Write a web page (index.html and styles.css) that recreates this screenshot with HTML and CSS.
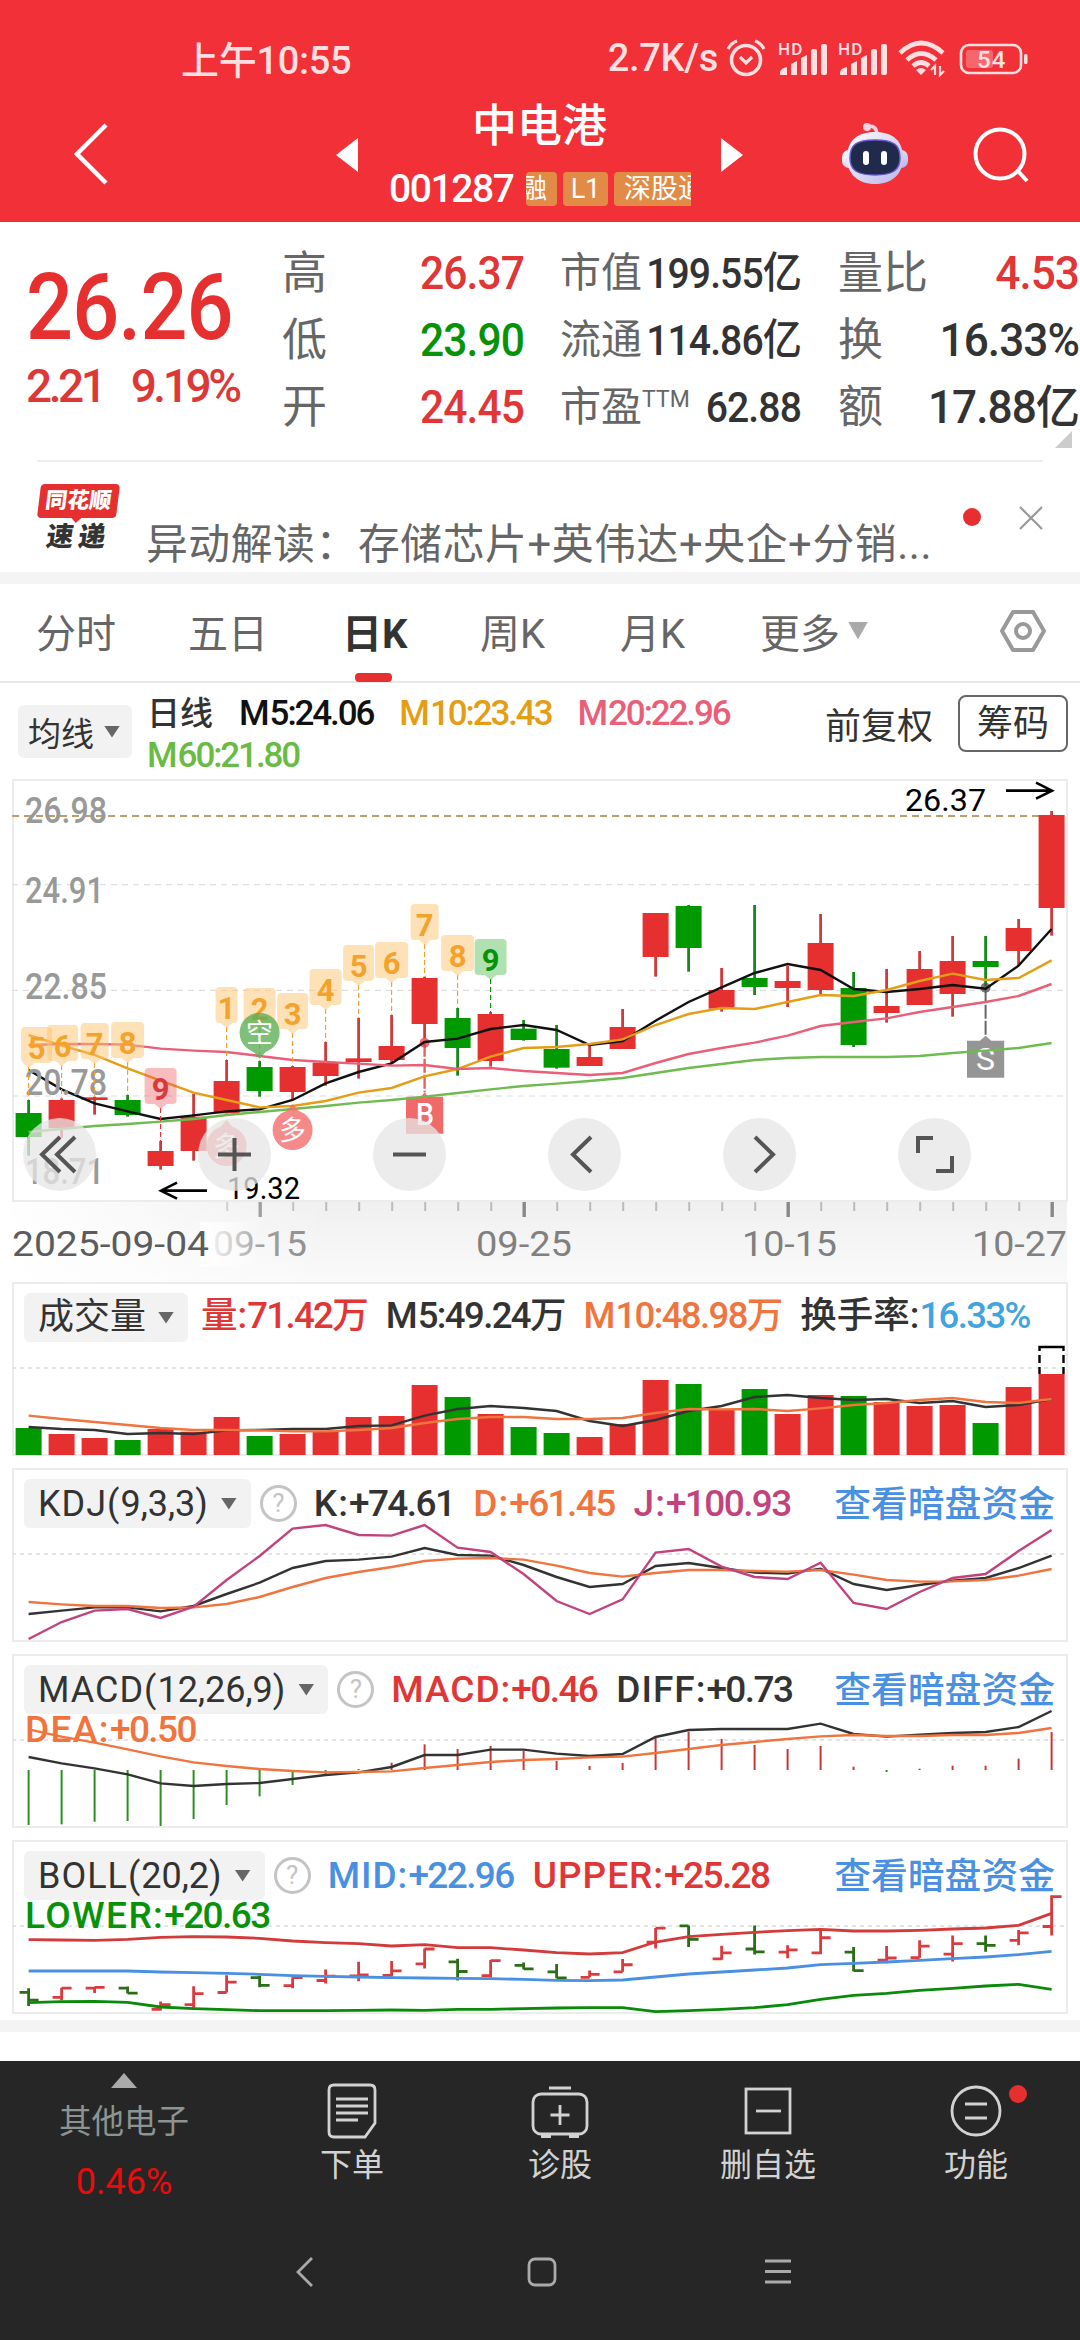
FILE: index.html
```html
<!DOCTYPE html>
<html lang="zh-CN">
  <head>
    <meta charset="UTF-8" />
    <meta name="viewport" content="width=device-width, initial-scale=1.0" />
    <title>中电港 001287</title>
    <link rel="stylesheet" href="styles.css" />
  </head>
  <body>
    <header class="header">
      <div class="status-bar">
        <span class="clock">上午10:55</span>
        <div class="status-right">
          <span class="speed">2.7K/s</span>
          <svg class="alarm" width="40" height="40" viewBox="0 0 40 40" fill="none" stroke="#ffdfe0" stroke-width="3.6">
            <circle cx="20" cy="21" r="14.5" />
            <path d="M14 18l6 6 6-6M2 10q3-6 9-8M38 10q-3-6-9-8" stroke-width="3.2" />
          </svg>
          <svg class="signal" width="50" height="36" viewBox="0 0 50 36" fill="#ffdfe0">
            <text x="0" y="14" font-size="17" font-weight="500" textLength="24">HD</text>
            <path d="M2 34v-3q1-4 7-5v8z" />
            <path d="M13 34V23l6-3v14z" />
            <path d="M23 34V17l6-3v20z" />
            <rect x="33" y="8" width="6" height="26" rx="2" />
            <rect x="43" y="3" width="6" height="31" rx="2" />
          </svg>
          <svg class="signal" width="50" height="36" viewBox="0 0 50 36" fill="#ffdfe0">
            <text x="0" y="14" font-size="17" font-weight="500" textLength="24">HD</text>
            <path d="M2 34v-3q1-4 7-5v8z" />
            <path d="M13 34V23l6-3v14z" />
            <path d="M23 34V17l6-3v20z" />
            <rect x="33" y="8" width="6" height="26" rx="2" />
            <rect x="43" y="3" width="6" height="31" rx="2" />
          </svg>
          <svg class="wifi" width="48" height="38" viewBox="0 0 48 38" fill="none" stroke="#ffdfe0" stroke-width="4.6">
            <path d="M2 13Q23-7 45 13M9 20Q23 7 38 20M15 26Q23 19 31 26" />
            <path d="M23 35l-5-5q5-4 10 0z" fill="#ffdfe0" stroke="none" />
            <path d="M37 35v-9l-4 4M42 26v9l4-4" stroke-width="2.2" />
          </svg>
          <svg class="battery" width="70" height="34" viewBox="0 0 70 34">
            <rect x="2" y="3" width="60" height="28" rx="8" fill="none" stroke="#ffdfe0" stroke-width="2.6" />
            <rect x="7" y="8" width="27" height="18" rx="3" fill="#f6676c" />
            <rect x="65" y="12" width="3.5" height="10" rx="1.5" fill="#ffdfe0" />
            <text x="18" y="26" font-size="24" font-weight="500" fill="#ffdfe0" textLength="28">54</text>
          </svg>
        </div>
      </div>
      <div class="title-bar">
        <svg class="back" width="40" height="64" viewBox="0 0 40 64" fill="none" stroke="#fff" stroke-width="4.5">
          <path d="M36 3L7 32l29 29" />
        </svg>
        <svg class="prev" width="22" height="34" viewBox="0 0 22 34"><path d="M22 0v34L0 17z" fill="#fff" /></svg>
        <div class="stock">
          <h1>中电港</h1>
          <div class="stock-sub">
            <span class="code">001287</span>
            <div class="tags">
              <span class="tag tag-first">融</span>
              <span class="tag">L1</span>
              <span class="tag tag-last">深股通</span>
            </div>
          </div>
        </div>
        <svg class="next" width="22" height="34" viewBox="0 0 22 34"><path d="M0 0v34l22-17z" fill="#fff" /></svg>
        <svg class="robot" width="68" height="64" viewBox="0 0 68 64">
          <defs>
            <linearGradient id="shell" x2="1" y2="1">
              <stop offset="0" stop-color="#ffffff" />
              <stop offset="1" stop-color="#b9b4ec" />
            </linearGradient>
          </defs>
          <path d="M26 6q9-3 10 7" fill="none" stroke="#f7cfdc" stroke-width="3.500" />
          <circle cx="26" cy="6" r="4" fill="#f9d3dd" />
          <rect x="1" y="29" width="66" height="18" rx="7" fill="url(#shell)" />
          <path d="M34 11c18 0 28 9 28 26 0 16-11 26-28 26S6 53 6 37c0-17 10-26 28-26z" fill="url(#shell)" />
          <path d="M34 19c19 0 25 5 25 18 0 12-7 17-25 17S9 49 9 37c0-13 6-18 25-18z" fill="#1f2a4c" stroke="#6a58c8" stroke-width="1.500" />
          <rect x="22" y="30" width="6" height="14" rx="3" fill="#fff" />
          <rect x="40" y="30" width="6" height="14" rx="3" fill="#fff" />
        </svg>
        <svg class="search" width="60" height="60" viewBox="0 0 60 60" fill="none" stroke="#fff" stroke-width="4">
          <circle cx="27" cy="28" r="24.500" />
          <path d="M44 44l10 11" />
        </svg>
      </div>
    </header>

    <section class="quote">
      <div class="quote-price">
        <div class="price">26.26</div>
        <div class="change"><span>2.21</span><span>9.19%</span></div>
      </div>
      <dl class="quote-col col-a">
        <dt>高</dt><dd class="up">26.37</dd>
        <dt>低</dt><dd class="down">23.90</dd>
        <dt>开</dt><dd class="up">24.45</dd>
      </dl>
      <dl class="quote-col col-b">
        <dt>市值</dt><dd>199.55亿</dd>
        <dt>流通</dt><dd>114.86亿</dd>
        <dt>市盈<sup>TTM</sup></dt><dd>62.88</dd>
      </dl>
      <dl class="quote-col col-c">
        <dt>量比</dt><dd class="up">4.53</dd>
        <dt>换</dt><dd>16.33%</dd>
        <dt>额</dt><dd>17.88亿</dd>
      </dl>
      <i class="corner"></i>
    </section>

    <section class="news">
      <div class="news-logo">
        <span class="logo-top">同花顺</span>
        <span class="logo-bottom">速递</span>
      </div>
      <p>异动解读：存储芯片+英伟达+央企+分销...</p>
      <i class="news-dot"></i>
      <svg class="news-close" width="24" height="24" viewBox="0 0 24 24" stroke="#999" stroke-width="2.2"><path d="M1 1l22 22M23 1L1 23" /></svg>
    </section>

    <nav class="tabs">
      <span>分时</span>
      <span>五日</span>
      <span class="active">日K</span>
      <span>周K</span>
      <span>月K</span>
      <span class="more">更多<i></i></span>
      <svg width="46" height="44" viewBox="0 0 46 44" fill="none" stroke="#999" stroke-width="4">
        <path d="M13 3h20l11 19-11 19H13L2 22z" stroke-linejoin="round" />
        <circle cx="23" cy="22" r="7" />
      </svg>
    </nav>

    <section class="ma-bar">
      <span class="chip">均线<i></i></span>
      <div class="ma-values">
        <span class="ma-name">日线</span>
        <span class="m5">M<b>5:24.06</b></span>
        <span class="m10">M<b>10:23.43</b></span>
        <span class="m20">M<b>20:22.96</b></span>
        <span class="m60">M<b>60:21.80</b></span>
      </div>
      <span class="adjust">前复权</span>
      <span class="chips-btn">筹码</span>
    </section>

    <section class="kline">
      <svg id="kline" width="1080" height="423" viewBox="0 0 1080 423"></svg>
      <div class="tools">
        <svg viewBox="0 0 73 73"><path d="M37 19L19 36.500l18 17.500M52 19L34 36.500l18 17.500" /></svg>
        <svg viewBox="0 0 73 73"><path d="M20 36.500h33M36.500 20v33" /></svg>
        <svg viewBox="0 0 73 73"><path d="M20 36.500h33" /></svg>
        <svg viewBox="0 0 73 73"><path d="M43 19L25 36.500l18 17.500" /></svg>
        <svg viewBox="0 0 73 73"><path d="M32 19l18 17.500-18 17.500" /></svg>
        <svg viewBox="0 0 73 73"><path d="M35 20H20v15M38 53h16V38" /></svg>
      </div>
    </section>
    <svg class="dates" id="dates" width="1080" height="80" viewBox="0 0 1080 80"></svg>

    <section class="panel volume-panel">
      <svg class="plot" id="volume" width="1080" height="174" viewBox="0 0 1080 174"></svg>
      <div class="panel-head">
        <span class="chip">成交量<i></i></span>
        <span class="up">量:<b>71.42</b>万</span>
        <span>M<b>5:49.24</b>万</span>
        <span class="orange">M<b>10:48.98</b>万</span>
        <span>换手率:<b class="sky">16.33%</b></span>
      </div>
    </section>
    <section class="panel">
      <svg class="plot" id="kdj" width="1080" height="174" viewBox="0 0 1080 174"></svg>
      <div class="panel-head">
        <span class="chip">KDJ(<b>9,3,3</b>)<i></i></span>
        <em class="help">?</em>
        <span>K:<b>+74.61</b></span>
        <span class="orange">D:<b>+61.45</b></span>
        <span class="purple">J:<b>+100.93</b></span>
        <a>查看暗盘资金</a>
      </div>
    </section>
    <section class="panel">
      <svg class="plot" id="macd" width="1080" height="174" viewBox="0 0 1080 174"></svg>
      <div class="panel-head">
        <span class="chip">MACD(<b>12,26,9</b>)<i></i></span>
        <em class="help">?</em>
        <span class="up">MACD:<b>+0.46</b></span>
        <span>DIFF:<b>+0.73</b></span>
        <a>查看暗盘资金</a>
      </div>
      <div class="panel-second orange">DEA:<b>+0.50</b></div>
    </section>
    <section class="panel">
      <svg class="plot" id="boll" width="1080" height="174" viewBox="0 0 1080 174"></svg>
      <div class="panel-head">
        <span class="chip">BOLL(<b>20,2</b>)<i></i></span>
        <em class="help">?</em>
        <span class="blue">MID:<b>+22.96</b></span>
        <span class="up">UPPER:<b>+25.28</b></span>
        <a>查看暗盘资金</a>
      </div>
      <div class="panel-second down">LOWER:<b>+20.63</b></div>
    </section>
    <div class="band"></div>

    <footer class="footer">
      <div class="actions">
        <div class="sector">
          <i></i>
          <span>其他电子</span>
          <strong>0.46%</strong>
        </div>
        <div class="action">
          <svg width="60" height="60" viewBox="0 0 60 60">
            <path d="M12 4h36q5 0 5 5v33L43 56H12q-5 0-5-5V9q0-5 5-5z" />
            <path d="M14 18h32M14 25h32M14 32h32M14 39h22" />
          </svg>
          <span>下单</span>
        </div>
        <div class="action">
          <svg width="60" height="60" viewBox="0 0 60 60">
            <rect x="3" y="13" width="54" height="40" rx="8" />
            <path d="M19 7h22M30 24v20M20.500 34h19" />
            <path d="M11 55h10M39 55h10" stroke-width="4" />
          </svg>
          <span>诊股</span>
        </div>
        <div class="action">
          <svg width="60" height="60" viewBox="0 0 60 60">
            <rect x="8" y="8" width="44" height="44" />
            <path d="M18 30h25" />
          </svg>
          <span>删自选</span>
        </div>
        <div class="action">
          <svg width="60" height="60" viewBox="0 0 60 60">
            <circle cx="30" cy="30" r="24" />
            <path d="M19 23h22M19 37h22" />
          </svg>
          <span>功能</span>
          <i class="badge"></i>
        </div>
      </div>
      <div class="system-nav">
        <svg width="30" height="30" viewBox="0 0 30 30"><path d="M21 1L7 15l14 14" /></svg>
        <svg width="30" height="30" viewBox="0 0 30 30"><rect x="2" y="2" width="26" height="26" rx="6" /></svg>
        <svg width="30" height="30" viewBox="0 0 30 30"><path d="M2 4h26M2 14.500h26M2 25h26" /></svg>
      </div>
    </footer>
    <script src="charts.js"></script>
  </body>
</html>
```

FILE: styles.css
```css
* {
  box-sizing: border-box;
}

body {
  margin: 0;
  width: 1080px;
  background-color: #fff;
  color: #333;
  font-family: Roboto, "Noto Sans CJK SC", sans-serif;
  font-size: 36px;
}

h1,
p,
dl,
dd {
  margin: 0;
}

i,
em {
  font-style: normal;
}

svg {
  display: block;
  flex: none;
}

.up {
  color: #e03636;
}
.down {
  color: #079207;
}
.orange {
  color: #f0743e;
}
.purple {
  color: #c2437c;
}
.blue {
  color: #4a90e2;
}
.sky {
  color: #3fa4e0;
}

/* header */
.header {
  height: 222px;
  background-color: #f13038;
  color: #fff;
}

.status-bar {
  display: flex;
  justify-content: space-between;
  align-items: center;
  height: 95px;
  padding: 22px 51px 0 181px;
  font-size: 38px;
  font-weight: 500;
  letter-spacing: -0.3px;
  color: #ffdfe0;
}

.status-right {
  display: flex;
  align-items: center;
}

.speed {
  margin-right: 8px;
}
.alarm {
  margin-right: 12px;
}
.signal {
  margin-right: 10px;
}
.wifi {
  margin-right: 13px;
}

.status-bar span {
  position: relative;
  top: -1px;
}

.title-bar {
  display: flex;
  height: 127px;
  padding-left: 70px;
}

.back {
  margin-top: 27px;
}
.prev {
  margin: 43px 0 0 226px;
}
.stock {
  width: 363px;
  padding-left: 31px;
}
.next {
  margin-top: 43px;
}
.robot {
  margin: 26px 0 0 98px;
}
.search {
  margin: 31px 0 0 64px;
}

.stock h1 {
  width: 301px;
  height: 64px;
  font-size: 45px;
  font-weight: 500;
  line-height: 64px;
  text-align: center;
}

.stock-sub {
  display: flex;
  align-items: center;
  height: 60px;
}

.code {
  width: 137px;
  font-size: 39px;
  font-weight: 500;
  letter-spacing: -1.4px;
}

.tags {
  display: flex;
  gap: 6px;
  width: 165px;
  overflow: hidden;
}

.tag {
  flex: none;
  width: 45px;
  height: 34px;
  border-radius: 4px;
  background-color: #e28b46;
  font-size: 27px;
  line-height: 34px;
  text-align: center;
}

.tag-first {
  width: 31px;
  text-align: left;
  text-indent: -6px;
}

.tag-last {
  width: 100px;
  padding-left: 10px;
  text-align: left;
}

/* quote */
.quote {
  position: relative;
  display: flex;
  height: 240px;
  padding: 18px 0 0 26px;
}

.quote::after {
  content: "";
  position: absolute;
  left: 37px;
  right: 37px;
  bottom: 0;
  height: 2px;
  background-color: #eee;
}

.quote-price {
  width: 256px;
  color: #e63030;
}

.price {
  height: 115px;
  font-size: 93px;
  font-weight: 500;
  line-height: 136px;
  letter-spacing: -1px;
  transform: scaleX(0.89);
  transform-origin: left;
}

.change {
  display: flex;
  gap: 27px;
  font-size: 46px;
  font-weight: 500;
  line-height: 62px;
  letter-spacing: -3.4px;
  color: #dc3838;
}

.quote-col {
  display: grid;
  grid-template-columns: 0 1fr;
  grid-auto-rows: 67px;
  line-height: 67px;
  height: 201px;
}

.quote-col dt {
  color: #666;
  font-size: 45px;
  white-space: nowrap;
}

.quote-col dd {
  text-align: right;
  font-size: 46px;
  font-weight: 500;
  letter-spacing: -1px;
  white-space: nowrap;
  transform-origin: right;
}

.col-a {
  width: 242px;
  margin-right: 36px;
}
.col-a dd {
  transform: scaleX(0.925);
}
.col-b {
  width: 241px;
  margin-right: 37px;
}
.col-b dt {
  font-size: 41px;
}
.col-b dd {
  font-size: 43px;
  transform: scaleX(0.91);
}
.col-c {
  width: 241px;
}
.col-c dd {
  transform: scaleX(0.96);
}

.quote-col sup {
  display: inline-block;
  font-size: 23px;
  line-height: 1;
  vertical-align: 14px;
}

.corner {
  position: absolute;
  right: 8px;
  bottom: 14px;
  width: 17px;
  height: 17px;
  background-color: #ccc;
  clip-path: polygon(100% 0, 100% 100%, 0 100%);
}

/* news */
.news {
  display: flex;
  height: 122px;
  padding: 22px 37px 0 38px;
  border-bottom: 12px solid #f4f4f4;
}

.news-logo {
  width: 81px;
  font-weight: 900;
  text-align: center;
}

.logo-top {
  display: block;
  height: 34px;
  margin: 0 1px;
  border-radius: 4px;
  background-color: #e63030;
  color: #fff;
  font-size: 22px;
  line-height: 33px;
  transform: skewX(-7deg);
}

.logo-top::after {
  content: "";
  display: block;
  width: 12px;
  height: 6px;
  margin: 0 auto;
  background-color: #e63030;
  clip-path: polygon(0 0, 100% 0, 50% 100%);
}

.logo-bottom {
  display: block;
  font-size: 27px;
  letter-spacing: 5px;
  line-height: 39px;
  transform: skewX(-8deg);
}

.news p {
  width: 808px;
  margin-left: 27px;
  color: #666;
  font-size: 41.800px;
  letter-spacing: 0.6px;
  line-height: 121px;
  white-space: nowrap;
}

.news-dot {
  width: 18px;
  height: 18px;
  margin: 24px 38px 0 10px;
  border-radius: 50%;
  background-color: #e63030;
}

.news-close {
  margin-top: 22px;
}

/* period tabs */
.tabs {
  display: flex;
  align-items: center;
  height: 99px;
  padding: 0 34px 4px 36px;
  border-bottom: 2px solid #e8e8e8;
  color: #666;
  font-size: 40px;
}

.tabs span {
  position: relative;
  width: 140px;
  white-space: nowrap;
}
.tabs span:nth-child(1) {
  width: 152px;
}
.tabs span:nth-child(2) {
  width: 154px;
}
.tabs span.active {
  width: 138px;
  color: #333;
  font-weight: 700;
}

.tabs .active::after {
  content: "";
  position: absolute;
  left: 13px;
  bottom: -22px;
  width: 37px;
  height: 9px;
  border-radius: 4px;
  background-color: #e63030;
}

.tabs .more {
  display: flex;
  align-items: center;
  width: 240px;
}

.more i {
  width: 20px;
  height: 18px;
  margin-left: 8px;
  background-color: #aaa;
  clip-path: polygon(0 0, 100% 0, 50% 100%);
}

/* moving averages */
.ma-bar {
  display: flex;
  height: 96px;
  padding-left: 18px;
}

.chip {
  display: flex;
  align-items: center;
  flex: none;
  border-radius: 6px;
  background-color: #f2f2f2;
  color: #333;
}

.chip i {
  width: 16px;
  height: 12px;
  background-color: #666;
  clip-path: polygon(0 0, 100% 0, 50% 100%);
}

.ma-bar .chip {
  width: 114px;
  height: 53px;
  margin-top: 22px;
  padding-left: 10px;
  font-size: 33px;
}
.ma-bar .chip i {
  margin-left: 10px;
}

.ma-values {
  display: flex;
  flex-wrap: wrap;
  align-content: flex-start;
  column-gap: 26px;
  width: 693px;
  padding: 10px 60px 0 15px;
  font-size: 35px;
  font-weight: 500;
  line-height: 42px;
}

b {
  font-weight: 500;
  letter-spacing: -1.6px;
}

.ma-values b {
  letter-spacing: -2.1px;
}
.ma-name {
  font-size: 33px;
}
.m5 {
  color: #111;
}
.m10 {
  color: #e59d16;
}
.m20 {
  color: #e95f78;
}
.m60 {
  color: #69bb45;
}

.adjust {
  width: 133px;
  line-height: 89px;
}

.chips-btn {
  width: 110px;
  height: 57px;
  margin-top: 12px;
  border: 2px solid #666;
  border-radius: 8px;
  line-height: 54px;
  text-align: center;
}

/* candles */
.kline {
  position: relative;
  height: 423px;
}

.tools {
  position: absolute;
  left: 23px;
  top: 339px;
  display: flex;
  gap: 102px;
}

.tools svg {
  width: 73px;
  height: 73px;
  border-radius: 50%;
  background-color: rgba(230, 230, 230, 0.76);
  fill: none;
  stroke: #555;
  stroke-width: 4;
}

.dates {
  height: 80px;
}

/* indicators */
.panel {
  position: relative;
  height: 174px;
  margin-bottom: 12px;
}

.plot {
  position: absolute;
  left: 0;
  top: 0;
}

.panel-head {
  position: relative;
  display: flex;
  align-items: center;
  gap: 19px;
  height: 71px;
  padding: 0 25px 0 24px;
  font-size: 37px;
  font-weight: 500;
  letter-spacing: 1px;
  white-space: nowrap;
}

.panel-head .chip {
  height: 49px;
  padding: 0 14px;
  margin-right: -4px;
  font-size: 36px;
  font-weight: 400;
}
.panel-head .chip i {
  margin-left: 12px;
}
.panel-head .chip b {
  font-weight: 400;
  letter-spacing: 0;
}

.volume-panel .panel-head {
  gap: 17px;
  font-size: 36.500px;
  letter-spacing: 0;
  line-height: 39px;
}
.volume-panel .panel-head > span:not(.chip) {
  padding-bottom: 4px;
}

.help {
  width: 37px;
  height: 37px;
  margin: 0 -2px 0 -6px;
  border: 3px solid #c4c4c4;
  border-radius: 50%;
  color: #c4c4c4;
  font-size: 26px;
  font-weight: 400;
  letter-spacing: 0;
  line-height: 31px;
  text-align: center;
}

.panel-head a {
  margin-left: auto;
  padding-bottom: 5px;
  color: #4a90e2;
  font-size: 36.800px;
  letter-spacing: 0;
}

.panel-second {
  position: relative;
  padding-left: 25px;
  margin-top: -17px;
  font-size: 37px;
  font-weight: 500;
  letter-spacing: 1.4px;
  line-height: 43px;
}

.band {
  height: 12px;
  margin-top: -6px;
  background-color: #f4f4f4;
}

/* footer */
.footer {
  height: 279px;
  margin-top: 29px;
  background-color: #262626;
}

.actions {
  display: flex;
  height: 160px;
  color: #d2d2d2;
  font-size: 32px;
}

.sector {
  display: flex;
  flex-direction: column;
  align-items: center;
  width: 248px;
  padding-top: 12px;
  color: #8b9490;
}

.sector i {
  width: 26px;
  height: 15px;
  background-color: #aaa;
  clip-path: polygon(50% 0, 100% 100%, 0 100%);
}
.sector span {
  font-size: 32.500px;
  line-height: 69px;
}
.sector strong {
  color: #e80c0c;
  font-size: 36px;
  font-weight: 400;
  line-height: 50px;
}

.action {
  position: relative;
  width: 208px;
  padding-top: 20px;
  text-align: center;
}

.action svg {
  margin: 0 auto;
  fill: none;
  stroke: #d2d2d2;
  stroke-width: 2.800;
}

.action span {
  display: block;
  line-height: 48px;
}

.badge {
  position: absolute;
  left: 137px;
  top: 24px;
  width: 18px;
  height: 18px;
  border-radius: 50%;
  background-color: #e63030;
}

.system-nav {
  display: flex;
  gap: 206px;
  padding: 36px 0 0 291px;
}

.system-nav svg {
  fill: none;
  stroke: #aaa;
  stroke-width: 2.800;
}
```

FILE: charts.js
```js
const NS = "http://www.w3.org/2000/svg";
const RED = "#e63030";
const GREEN = "#009900";
const N = 32;
const cx = (i) => 28.6 + 33 * i;

// high, body top, body bottom, low (in 1/3 px), 1 = rising day
const candles = [
  [990, 1029, 1101, 1157, 0], [985, 990, 1075, 1103, 1], [980, 982, 990, 1034, 1], [975, 990, 1035, 1040, 0],
  [1113, 1143, 1188, 1199, 1], [971, 1040, 1143, 1172, 1], [870, 933, 1030, 1030, 1], [873, 891, 963, 980, 0],
  [888, 891, 966, 990, 1], [816, 878, 918, 947, 1], [744, 865, 876, 926, 1], [735, 828, 870, 880, 1],
  [620, 624, 762, 805, 1], [714, 744, 834, 917, 0], [726, 732, 873, 890, 1], [750, 776, 810, 812, 0],
  [765, 837, 893, 896, 0], [825, 861, 888, 888, 1], [717, 771, 837, 837, 1], [429, 429, 561, 620, 1],
  [405, 408, 534, 605, 0], [594, 660, 716, 725, 1], [405, 624, 651, 675, 0], [588, 633, 654, 711, 1],
  [432, 519, 660, 672, 1], [606, 654, 825, 831, 0], [597, 708, 729, 758, 1], [543, 597, 705, 705, 1],
  [498, 573, 672, 740, 1], [498, 573, 591, 650, 0], [447, 474, 543, 588, 1], [123, 135, 414, 497, 1],
];
const ma = {
  "#111": [900, 958, 1000, 1024, 1047, 1036, 1024, 1018, 990, 940, 906, 880, 816, 806, 777, 765, 780, 825, 813, 752, 696, 652, 609, 582, 600, 657, 666, 657, 645, 656, 587, 477],
  "#e59d16": [795, 826, 855, 895, 932, 968, 990, 1012, 1008, 993, 968, 954, 919, 897, 860, 834, 831, 822, 808, 765, 732, 714, 717, 696, 675, 678, 660, 633, 611, 630, 624, 571],
  "#e95f78": [825, 822, 822, 824, 836, 842, 846, 858, 870, 876, 881, 887, 885, 897, 894, 903, 909, 915, 909, 879, 852, 834, 818, 797, 768, 756, 745, 726, 711, 696, 678, 642],
  "#6fbb50": [1086, 1077, 1068, 1062, 1055, 1047, 1035, 1026, 1017, 1008, 998, 990, 980, 969, 958, 948, 941, 933, 924, 909, 894, 882, 870, 864, 861, 861, 861, 858, 849, 842, 834, 819],
};
const volume = [474, 492, 504, 510, 477, 485, 441, 498, 492, 484, 441, 438, 345, 381, 432, 471, 489, 501, 462, 330, 342, 418, 357, 432, 375, 378, 396, 408, 405, 459, 351, 312];
const volumeMa = {
  "#333": [471, 477, 480, 492, 489, 492, 481, 480, 477, 477, 468, 466, 437, 417, 408, 414, 423, 453, 468, 450, 423, 408, 381, 375, 384, 390, 387, 399, 393, 411, 405, 387],
  "#f0743e": [437, 447, 456, 465, 474, 480, 480, 481, 484, 484, 480, 474, 459, 447, 441, 441, 447, 447, 444, 429, 417, 418, 417, 423, 415, 405, 399, 390, 384, 396, 399, 387],
};
const kdj = {
  "#333": [1032, 1022, 1012, 1012, 1024, 1008, 972, 938, 894, 873, 869, 860, 834, 855, 857, 885, 921, 951, 942, 888, 879, 894, 908, 911, 896, 942, 960, 945, 932, 924, 894, 857],
  "#f0743e": [996, 1003, 1008, 1008, 1014, 1012, 1002, 981, 951, 924, 906, 891, 873, 866, 864, 869, 887, 909, 920, 909, 900, 900, 903, 905, 900, 914, 930, 935, 934, 930, 917, 897],
  "#c2437c": [1107, 1056, 1022, 1017, 1044, 1010, 930, 858, 776, 765, 795, 797, 765, 833, 846, 912, 993, 1032, 988, 848, 837, 890, 921, 927, 878, 999, 1017, 966, 924, 912, 843, 780],
};
const macd = [555, 553, 545, 543, 558, 537, 495, 469, 435, 402, 387, 368, 313, 327, 318, 333, 363, 378, 369, 291, 275, 297, 315, 327, 318, 380, 396, 386, 377, 377, 356, 276];
const macdLines = {
  "#333": [351, 370, 385, 403, 430, 438, 432, 429, 417, 405, 397, 381, 345, 345, 329, 329, 341, 348, 342, 291, 270, 267, 267, 267, 251, 282, 290, 284, 279, 276, 261, 213],
  "#f0743e": [268, 290, 308, 328, 349, 367, 378, 387, 393, 397, 396, 394, 384, 375, 366, 360, 357, 352, 350, 339, 327, 315, 306, 297, 289, 285, 288, 288, 285, 285, 279, 264],
};
const boll = {
  "#d33a3a": [899, 900, 901, 898, 892, 890, 891, 895, 903, 908, 911, 918, 914, 923, 923, 930, 938, 942, 938, 906, 890, 883, 877, 872, 868, 873, 873, 871, 867, 864, 856, 820],
  "#4a90e2": [993, 993, 993, 993, 996, 998, 1000, 1003, 1007, 1009, 1011, 1013, 1014, 1015, 1016, 1018, 1021, 1022, 1020, 1011, 1002, 996, 990, 984, 974, 970, 966, 961, 956, 951, 944, 934],
  "#0a8a0a": [1088, 1085, 1084, 1087, 1101, 1106, 1109, 1112, 1112, 1112, 1111, 1110, 1111, 1108, 1108, 1106, 1104, 1103, 1103, 1115, 1112, 1108, 1103, 1094, 1078, 1066, 1060, 1051, 1045, 1038, 1033, 1048],
};

function add(svg, name, attrs, text) {
  const el = document.createElementNS(NS, name);
  for (const key in attrs) el.setAttribute(key, attrs[key]);
  if (text) el.textContent = text;
  svg.appendChild(el);
  return el;
}

function line(svg, x1, y1, x2, y2, stroke, width, dash) {
  add(svg, "line", { x1, y1, x2, y2, stroke, "stroke-width": width, "stroke-dasharray": dash || "none" });
}

function label(svg, x, y, text, size, fill, width, weight = 400) {
  add(svg, "text", { x, y, "font-size": size, fill, "font-weight": weight, textLength: width, lengthAdjust: "spacingAndGlyphs" }, text);
}

function curves(svg, set, y, width) {
  for (const stroke in set) {
    const points = set[stroke].map((v, i) => `${cx(i)},${y(v)}`).join(" ");
    add(svg, "polyline", { points, fill: "none", stroke, "stroke-width": width });
  }
}

function frame(svg, height) {
  add(svg, "rect", { x: 13, y: 1, width: 1054, height: height - 2, fill: "none", stroke: "#ececec", "stroke-width": 2 });
}

// count tag above a candle, with a dashed stem down to its high
function countTag(svg, i, top, char, width, back, fore, shift = 0) {
  const x = cx(i);
  const c = x + shift;
  line(svg, x, top + 40, x, candles[i][0] / 3 - 9, fore, 1.2, "5 3");
  add(svg, "rect", { x: c - width / 2, y: top, width, height: 36, rx: 4, fill: back });
  add(svg, "path", { d: `M${x - 6} ${top + 36}h12l-6 5z`, fill: back });
  add(svg, "text", { x: c, y: top + 32, "font-size": 31, "font-weight": 700, fill: fore, "text-anchor": "middle" }, char);
}

function drawKline() {
  const svg = document.getElementById("kline");
  const y = (v) => v / 3 - 9;
  frame(svg, 423);
  [344, 661, 978].forEach((v) => line(svg, 12, y(v), 1067, y(v), "#dedede", 1.2, "6 5"));
  line(svg, 12, y(138), 1067, y(138), "#b9a06c", 1.8, "7 5");

  candles.forEach(([high, top, bottom, low, up], i) => {
    const fill = up ? RED : GREEN;
    line(svg, cx(i), y(high), cx(i), y(low), up ? "#d03a3a" : "#16891a", 2.8);
    add(svg, "rect", { x: cx(i) - 13, y: y(top), width: 26, height: (bottom - top) / 3, fill });
  });

  // buy and sell marks
  line(svg, cx(12), y(818), cx(12), y(967), "#e86060", 2.4, "14 2");
  add(svg, "circle", { cx: cx(12), cy: y(818), r: 5, fill: "#e63030", opacity: 0.7 });
  add(svg, "path", { d: `M406 ${y(980)}h15l3.600-4.500 3.600 4.500h15v37h-37.200z`, fill: "#f06a6a" });
  label(svg, 416, y(1066), "B", 31, "#fff", 18, 500);
  line(svg, cx(29), y(656), cx(29), y(800), "#666", 2, "14 2");
  add(svg, "circle", { cx: cx(29), cy: y(653), r: 5, fill: "#555", opacity: 0.8 });
  add(svg, "path", { d: `M967 ${y(812)}h13l5.600-5 5.600 5h13v37h-37.200z`, fill: "#959595" });
  label(svg, 976, y(900), "S", 31, "#fff", 19);

  curves(svg, ma, y, 2.4);
  [["26.98", 158], ["24.91", 398], ["22.85", 686], ["20.78", 976], ["18.71", 1242]].forEach(([text, v]) =>
    label(svg, 25, y(v), text, 36, "#999", text[4] === "1" ? 79 : 82, 500)
  );

  const pale = "rgba(255, 196, 112, 0.5)";
  const amber = "#f3a32c";
  countTag(svg, 0, 248, "5", 31, pale, amber, 8);
  countTag(svg, 1, 246, "6", 31, pale, amber, 1);
  countTag(svg, 2, 244, "7", 28, pale, amber);
  countTag(svg, 3, 243, "8", 33, pale, amber);
  countTag(svg, 4, 289, "9", 32, "rgba(238, 80, 86, 0.38)", "#d8393c");
  countTag(svg, 6, 208, "1", 22, pale, amber);
  countTag(svg, 7, 209, "2", 32, pale, amber);
  countTag(svg, 8, 214, "3", 31, pale, amber);
  countTag(svg, 9, 190, "4", 32, pale, amber);
  countTag(svg, 10, 166, "5", 31, pale, amber);
  countTag(svg, 11, 163, "6", 33, pale, amber);
  countTag(svg, 12, 125, "7", 28, pale, amber);
  countTag(svg, 13, 156, "8", 33, pale, amber);
  countTag(svg, 14, 160, "9", 32, "rgba(50, 175, 50, 0.38)", "#079207");

  [[7, 788, "空", "#5bae54", 1], [8, 1080, "多", "#f46a6a", -1], [6, 1128, "多", "#f46a6a", -1]].forEach(([i, v, char, fill, dir]) => {
    const g = add(svg, "g", { opacity: 0.78 });
    add(g, "circle", { cx: cx(i), cy: y(v), r: 20, fill });
    add(g, "path", { d: `M${cx(i) - 8} ${y(v) + dir * 17}h16l-8 ${dir * 9}z`, fill });
    add(g, "text", { x: cx(i), y: y(v) + 10, "font-size": 27, fill: "#fff", "text-anchor": "middle" }, char);
  });

  label(svg, 905, y(123), "26.37", 32, "#000", 81);
  add(svg, "path", { d: `M1006 ${y(62)}h46M1036 ${y(62) - 8}l16 8-16 8`, fill: "none", stroke: "#000", "stroke-width": 2.6 });
  label(svg, 227, y(1286), "19.32", 32, "#000", 73);
  add(svg, "path", { d: `M207 ${y(1262)}h-46M177 ${y(1262) - 8}l-16 8 16 8`, fill: "none", stroke: "#000", "stroke-width": 2.6 });
}

function drawDates() {
  const svg = document.getElementById("dates");
  const defs = add(svg, "defs", {});
  const shade = add(defs, "linearGradient", { id: "shade", x2: 0, y2: 1 });
  add(shade, "stop", { offset: 0, "stop-color": "#f0f0f0" });
  add(shade, "stop", { offset: 1, "stop-color": "#fafafa" });
  const fade = add(defs, "linearGradient", { id: "fade" });
  add(fade, "stop", { offset: 0, "stop-color": "#fff" });
  add(fade, "stop", { offset: 1, "stop-color": "#fff", "stop-opacity": 0 });
  add(svg, "rect", { x: 0, y: 0, width: 1067, height: 80, fill: "url(#shade)" });
  for (let i = 6; i < N; i++) {
    const major = i % 8 === 7;
    line(svg, cx(i) + 0.6, 0, cx(i) + 0.6, major ? 15 : 9, major ? "#888" : "#bbb", major ? 3.4 : 2);
  }
  label(svg, 213, 54, "09-15", 35, "#888", 94);
  add(svg, "rect", { x: 0, y: 0, width: 330, height: 80, fill: "url(#fade)" });
  add(svg, "rect", { x: 200, y: 20, width: 60, height: 45, fill: "url(#fade)" });
  label(svg, 12, 54, "2025-09-04", 35, "#5c5c5c", 197);
  label(svg, 476, 54, "09-25", 35, "#808080", 96);
  label(svg, 742, 54, "10-15", 35, "#808080", 95);
  label(svg, 972, 54, "10-27", 35, "#808080", 95);
}

function drawVolume() {
  const svg = document.getElementById("volume");
  const y = (v) => v / 3 - 12;
  frame(svg, 174);
  line(svg, 12, y(294), 1067, y(294), "#e4e4e4", 1.8, "4 4");
  volume.forEach((v, i) => {
    add(svg, "rect", { x: cx(i) - 13, y: y(v), width: 26, height: 173 - y(v), fill: candles[i][4] ? RED : GREEN });
  });
  curves(svg, volumeMa, y, 2.4);
  add(svg, "path", { d: "M1039.500 92V65h24V92", fill: "none", stroke: "#000", "stroke-width": 2.4, "stroke-dasharray": "7 4 8 4 32 4 8 4" });
}

function drawKdj() {
  const svg = document.getElementById("kdj");
  const y = (v) => v / 3 - 198;
  frame(svg, 174);
  line(svg, 12, y(852), 1067, y(852), "#e4e4e4", 1.8, "4 4");
  curves(svg, kdj, y, 2.4);
}

function drawMacd() {
  const svg = document.getElementById("macd");
  const y = (v) => v / 3 - 14;
  frame(svg, 174);
  line(svg, 12, y(300), 1067, y(300), "#e4e4e4", 1.8, "4 4");
  macd.forEach((v, i) => line(svg, cx(i), y(390), cx(i), y(v), v > 390 ? "#2b9020" : "#c93636", 2));
  curves(svg, macdLines, y, 2.4);
}

function drawBoll() {
  const svg = document.getElementById("boll");
  const y = (v) => v / 3 - 200;
  frame(svg, 174);
  line(svg, 12, y(858), 1067, y(858), "#e4e4e4", 1.8, "4 4");
  candles.forEach(([high, top, bottom, low, up], i) => {
    const [h, t, b, l] = [high, top, bottom, low].map((v) => y(766 + (v - 123) * 0.3214));
    const d = `M${cx(i)} ${h}V${l}M${cx(i) - 9} ${up ? b : t}h9M${cx(i)} ${up ? t : b}h10`;
    add(svg, "path", { d, stroke: up ? "#dd3a3e" : "#2a6e16", "stroke-width": 2.8 });
  });
  curves(svg, boll, y, 2.8);
}

drawKline();
drawDates();
drawVolume();
drawKdj();
drawMacd();
drawBoll();
```
